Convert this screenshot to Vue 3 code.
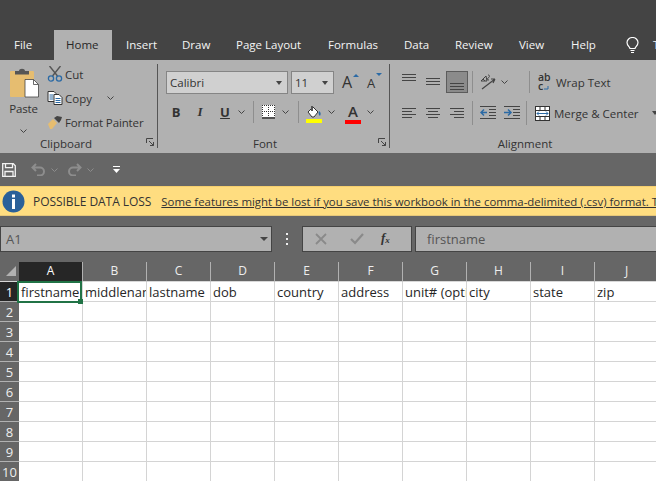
<script setup>
const tabs = [
  { name: 'File', w: 54, pl: 14 },
  { name: 'Home', w: 58, pl: 12, active: true },
  { name: 'Insert', w: 56, pl: 14 },
  { name: 'Draw', w: 54, pl: 14 },
  { name: 'Page Layout', w: 92, pl: 14 },
  { name: 'Formulas', w: 76, pl: 14 },
  { name: 'Data', w: 51, pl: 14 },
  { name: 'Review', w: 64, pl: 14 },
  { name: 'View', w: 52, pl: 14 },
  { name: 'Help', w: 56, pl: 14 }
]
const cols = ['A', 'B', 'C', 'D', 'E', 'F', 'G', 'H', 'I', 'J']
const first = ['firstname', 'middlename', 'lastname', 'dob', 'country', 'address', 'unit# (optional)', 'city', 'state', 'zip']
const rows = [2, 3, 4, 5, 6, 7, 8, 9, 10]
</script>

<template>
  <div class="app">
    <div class="title"></div>
    <nav class="tabs">
      <div v-for="t in tabs" :key="t.name" class="tab" :class="{ active: t.active }" :style="{ width: t.w + 'px', paddingLeft: t.pl + 'px' }">{{ t.name }}</div>
      <svg class="bulb" width="13" height="17" viewBox="0 0 13 17" fill="none" stroke="#fff" stroke-width="1.2"><path d="M4 11.5C3.5 9.5 1 8.5 1 5.5a5.5 5 0 0 1 11 0c0 3-2.500 4-3 6z"/><path d="M4.500 13.500h4M5 15.500h3"/></svg>
      <div class="tab tell">Tell me</div>
    </nav>

    <section class="ribbon">
      <div class="group clip">
        <div class="body clip-body">
          <div class="paste">
            <svg class="paste-ic" width="29" height="30" viewBox="0 0 29 30">
              <rect x="0" y="3" width="24" height="26" rx="1" fill="#e6bd70"/>
              <path d="M5 3h4c0-3 6-3 6 0h4v3.500H5z" fill="#555"/>
              <path d="M15 11.500h8.500l5 5V29H15z" fill="#fff" stroke="#444" stroke-width=".8"/>
              <path d="M23.500 11.500v5h5" fill="none" stroke="#444" stroke-width=".8"/>
            </svg>
            <span class="paste-label">Paste</span>
            <svg class="chev" viewBox="0 0 7 4"><path d="M.5.5l3 3 3-3"/></svg>
          </div>
          <div class="clip-list">
            <div class="clip-row">
              <svg width="15" height="16" viewBox="0 0 15 16" fill="none">
                <path d="M2 0l8 10M13 0L5 10" stroke="#555" stroke-width="1.400"/>
                <circle cx="3.500" cy="12.500" r="2.600" stroke="#2b6aa5" stroke-width="1.300"/>
                <circle cx="11.500" cy="12.500" r="2.600" stroke="#2b6aa5" stroke-width="1.300"/>
              </svg>
              <span>Cut</span>
            </div>
            <div class="clip-row">
              <svg width="15" height="14" viewBox="0 0 15 14">
                <path d="M.5.5h6l2 2v8H.5z" fill="#fff" stroke="#333"/>
                <path d="M2 4h4M2 6h4M2 8h4" stroke="#2b6aa5"/>
                <path d="M6.500 3.500h5l3 3v7h-8z" fill="#fff" stroke="#333"/>
                <path d="M8 7.500h5M8 9.500h5M8 11.500h5" stroke="#2b6aa5"/>
              </svg>
              <span>Copy</span>
              <svg class="chev copy-chev" viewBox="0 0 7 4"><path d="M.5.5l3 3 3-3"/></svg>
            </div>
            <div class="clip-row">
              <svg width="16" height="14" viewBox="0 0 16 14">
                <path d="M1 9l5-5 4 4-5 6H3z" fill="#e6bd70"/>
                <path d="M7 3l3-2 5 1-1 3-2 3z" fill="#444"/>
              </svg>
              <span class="painter">Format Painter</span>
            </div>
          </div>
        </div>
        <div class="label clip-label">Clipboard
          <svg class="launcher" width="8" height="8" viewBox="0 0 8 8" fill="none" stroke="#444"><path d="M.5 5V.5H7M3 3l4.500 4.500M7.500 4v3.500H4"/></svg>
        </div>
      </div>
      <div class="vsep"></div>

      <div class="group font">
        <div class="body font-body">
          <div class="row font-r1">
            <div class="combo combo-name"><span>Calibri</span><i class="caret"></i></div>
            <div class="combo combo-size"><span>11</span><i class="caret"></i></div>
            <div class="grow-a up">A<i class="tri-up"></i></div>
            <div class="grow-a down">A<i class="tri-down"></i></div>
          </div>
          <div class="row font-r2">
            <b class="fmt fb">B</b>
            <i class="fmt fi">I</i>
            <u class="fmt fu">U</u>
            <svg class="chev" viewBox="0 0 7 4"><path d="M.5.5l3 3 3-3"/></svg>
            <span class="isep sep-a"></span>
            <svg class="borders" width="13" height="14" viewBox="0 0 13 14">
              <rect width="13" height="12" fill="#fff"/>
              <path d="M.5 0v12M6.500 0v12M12.500 0v12M0 .5h13M0 6.500h13" stroke="#333" stroke-dasharray="1 1" fill="none"/>
              <path d="M0 13h13" stroke="#333" stroke-width="1.500"/>
            </svg>
            <svg class="chev ch-b" viewBox="0 0 7 4"><path d="M.5.5l3 3 3-3"/></svg>
            <span class="isep sep-b"></span>
            <svg class="fill" width="16" height="18" viewBox="0 0 16 18">
              <path d="M2 7l5-5 5 5-4 5-2 0z" fill="#fff" stroke="#333"/>
              <path d="M5 1h2v5H5z" fill="#555"/>
              <path d="M13 6c2 1 2 3 1 5-1-1-2-2-1-5z" fill="#2b6aa5"/>
              <rect y="14" width="16" height="4" fill="#ff0"/>
            </svg>
            <svg class="chev ch-c" viewBox="0 0 7 4"><path d="M.5.5l3 3 3-3"/></svg>
            <span class="color-a">A</span>
            <svg class="chev ch-d" viewBox="0 0 7 4"><path d="M.5.5l3 3 3-3"/></svg>
          </div>
        </div>
        <div class="label font-label">Font
          <svg class="launcher" width="8" height="8" viewBox="0 0 8 8" fill="none" stroke="#444"><path d="M.5 5V.5H7M3 3l4.500 4.500M7.500 4v3.500H4"/></svg>
        </div>
      </div>
      <div class="vsep"></div>

      <div class="group align">
        <div class="body align-body">
          <div class="row al-r1">
            <svg class="al" width="14" height="22" viewBox="0 0 14 22" stroke="#444"><path d="M0 3.500h14M0 6.500h14M0 9.500h14"/></svg>
            <svg class="al al-gap" width="14" height="22" viewBox="0 0 14 22" stroke="#444"><path d="M0 7.500h14M0 10.500h14M0 13.500h14"/></svg>
            <div class="al-btn">
              <svg width="14" height="22" viewBox="0 0 14 22" stroke="#444"><path d="M0 12.500h14M0 15.500h14M0 18.500h14"/></svg>
            </div>
            <span class="isep al-sep"></span>
            <svg class="orient" width="16" height="16" viewBox="0 0 16 16" fill="none">
              <path d="M2 15L15 5M15 5h-4M15 5l-2 4" stroke="#444" stroke-width="1.200"/>
              <path d="M1 7l5-5 1 5zM3 5l2 2M8 1c2 0 2 2 0 3-1 1-1 2 1 2" stroke="#444"/>
            </svg>
            <svg class="chev or-chev" viewBox="0 0 7 4"><path d="M.5.5l3 3 3-3"/></svg>
            <span class="isep al-sep2"></span>
            <svg class="wrap-ic" width="13" height="18" viewBox="0 0 13 18" fill="none">
              <path d="M8 15h4v-3" stroke="#2b6aa5"/>
            </svg>
            <span class="abc">ab<br>c</span>
            <span class="al-text wrap-t">Wrap Text</span>
          </div>
          <div class="row al-r2">
            <svg class="al" width="14" height="24" viewBox="0 0 14 24" stroke="#444"><path d="M0 7.500h14M0 10.500h10M0 13.500h14M0 16.500h10"/></svg>
            <svg class="al al-gap" width="14" height="24" viewBox="0 0 14 24" stroke="#444"><path d="M0 7.500h14M2 10.500h10M0 13.500h14M2 16.500h10"/></svg>
            <svg class="al al-gap" width="14" height="24" viewBox="0 0 14 24" stroke="#444"><path d="M0 7.500h14M4 10.500h10M0 13.500h14M4 16.500h10"/></svg>
            <span class="isep al-sep al-sep-b"></span>
            <svg class="ind" width="16" height="14" viewBox="0 0 16 14" fill="none">
              <path d="M0 .5h16M9 3.500h7M9 6.500h7M9 9.500h7M0 12.500h16" stroke="#444"/>
              <path d="M7 6.500H1M4 3.500l-3 3 3 3" stroke="#2b6aa5" stroke-width="1.500"/>
            </svg>
            <svg class="ind ind2" width="16" height="14" viewBox="0 0 16 14" fill="none">
              <path d="M0 .5h16M9 3.500h7M9 6.500h7M9 9.500h7M0 12.500h16" stroke="#444"/>
              <path d="M0 6.500h7M4 3.500l3 3-3 3" stroke="#2b6aa5" stroke-width="1.500"/>
            </svg>
            <span class="isep al-sep3"></span>
            <svg class="merge" width="15" height="15" viewBox="0 0 15 15" fill="none">
              <rect x=".5" y=".5" width="14" height="14" fill="#fff" stroke="#333"/>
              <path d="M0 4.500h15M0 10.500h15M5 .5v4M10 .5v4M5 10.500v4M10 10.500v4" stroke="#333"/>
              <path d="M2 7.500h11M4 5.500l-2 2 2 2M11 5.500l2 2-2 2" stroke="#2b6aa5"/>
            </svg>
            <span class="al-text merge-t">Merge &amp; Center</span>
            <i class="caret merge-caret"></i>
          </div>
        </div>
        <div class="label">Alignment</div>
      </div>
    </section>

    <div class="qat">
      <svg width="14" height="14" viewBox="0 0 14 14" fill="none" stroke="#f2f2f2" stroke-width="1.300"><path d="M.7.7h10.600l2 2v10.600H.7z"/><path d="M3.500.7v4h7v-4M3 13.300V8.500h8v4.800"/></svg>
      <svg class="q-undo" width="15" height="13" viewBox="0 0 15 13" fill="none" stroke="#8d8d8d" stroke-width="2"><path d="M5 1L1.500 4.500 5 8M2 4.500h7a4 4 0 0 1 0 8H6"/></svg>
      <svg class="chev q-chev" viewBox="0 0 7 4"><path d="M.5.5l3 3 3-3" stroke="#8d8d8d"/></svg>
      <svg class="q-redo" width="15" height="13" viewBox="0 0 15 13" fill="none" stroke="#8d8d8d" stroke-width="2"><path d="M10 1l3.500 3.500L10 8M13 4.500H6a4 4 0 0 0 0 8h3"/></svg>
      <svg class="chev q-chev" viewBox="0 0 7 4"><path d="M.5.5l3 3 3-3" stroke="#8d8d8d"/></svg>
      <svg class="q-cust" width="7" height="7" viewBox="0 0 7 7"><path d="M0 .5h7" stroke="#fff"/><path d="M0 3h7L3.500 7z" fill="#fff"/></svg>
    </div>

    <div class="msg">
      <svg width="23" height="23" viewBox="0 0 23 23"><circle cx="11.500" cy="11.500" r="11" fill="#2a6099"/><rect x="10" y="9" width="3" height="10" fill="#fff"/><rect x="10" y="4.500" width="3" height="3" fill="#fff"/></svg>
      <span class="msg-title">POSSIBLE DATA LOSS</span>
      <span class="msg-link">Some features might be lost if you save this workbook in the comma-delimited (.csv) format. To preserve these features</span>
    </div>

    <div class="fbar">
      <div class="namebox"><span>A1</span><i class="caret caret-lg"></i></div>
      <div class="dots"><i></i><i></i><i></i></div>
      <div class="fbtns">
        <svg width="12" height="12" viewBox="0 0 12 12" stroke="#8a8a8a" stroke-width="1.800"><path d="M1 1l10 10M11 1L1 11"/></svg>
        <svg class="fb-check" width="14" height="12" viewBox="0 0 14 12" fill="none" stroke="#8a8a8a" stroke-width="2.200"><path d="M1 6l4 4 8-9"/></svg>
        <span class="fx">f<sub>x</sub></span>
      </div>
      <div class="finput">firstname</div>
    </div>

    <div class="sheet">
      <div class="hdr corner"><svg width="10" height="10" viewBox="0 0 10 10"><path d="M10 0v10H0z" fill="#b1b1b1"/></svg></div>
      <div v-for="(c, i) in cols" :key="c" class="hdr" :class="{ sel: i === 0 }">{{ c }}</div>

      <div class="rh sel">1</div>
      <div v-for="(v, i) in first" :key="i" class="cell">
        <span>{{ v }}</span>
        <div v-if="i === 0" class="a1"><i class="handle"></i></div>
      </div>

      <template v-for="r in rows" :key="r">
        <div class="rh">{{ r }}</div>
        <div v-for="c in cols" :key="c" class="cell"></div>
      </template>
    </div>
  </div>
</template>

<style>
html, body { margin: 0; background: #666; overflow: hidden; }
</style>

<style scoped>
.app {
  width: 656px; height: 481px; overflow: hidden; background: #666; color: #333;
  font-family: "Open Sans", "Noto Sans", sans-serif; font-size: 11.5px;
}
.title { height: 30px; background: #444; }
.tabs { height: 30px; background: #444; display: flex; align-items: stretch; color: #f4f4f4; white-space: nowrap; overflow: hidden; }
.tab { box-sizing: border-box; line-height: 29px; flex: none; }
.tab.active { background: #b1b1b1; color: #262626; }
.bulb { flex: none; align-self: center; margin-left: 13px; }
.tell { margin-left: 14px; }

.ribbon { height: 93px; background: #b1b1b1; display: flex; overflow: hidden; white-space: nowrap; }
.group { display: flex; flex-direction: column; flex: none; height: 93px; }
.body { height: 75px; }
.label { position: relative; height: 18px; line-height: 18px; text-align: center; color: #333; box-sizing: border-box; }
.clip-label { padding-right: 25px; }
.font-label { padding-right: 17px; }
.launcher { position: absolute; right: 3px; top: 3px; }
.vsep { width: 1px; flex: none; margin: 4px 0 5px; background: #555; }
.row { display: flex; align-items: center; }
.chev { width: 7px; height: 4px; flex: none; display: block; fill: none; stroke: #444; }

.clip { width: 157px; }
.clip-body { display: flex; }
.paste { width: 47px; display: flex; flex-direction: column; align-items: center; padding-top: 8px; box-sizing: border-box; }
.paste-ic { margin-left: 1px; }
.paste-label { margin-top: 2px; line-height: 18px; letter-spacing: -.2px; }
.paste .chev { margin-top: 11px; }
.clip-list { padding-top: 2px; }
.clip-row { height: 24px; display: flex; align-items: center; position: relative; }
.clip-row > svg:first-child { width: 16px; margin-right: 2px; }
.copy-chev { margin-left: 15px; }
.painter { letter-spacing: -.12px; }

.font { width: 231px; }
.font-body { padding-left: 8px; box-sizing: border-box; }
.font-r1 { margin-top: 11px; height: 23px; }
.combo { box-sizing: border-box; height: 23px; background: #d0d0d0; border: 1px solid #858585; display: flex; align-items: center; justify-content: space-between; padding: 0 5px 0 3px; flex: none; color: #333; }
.combo-name { width: 122px; }
.combo-size { width: 43px; margin-left: 3px; }
.caret { display: block; width: 0; height: 0; border: 3px solid transparent; border-top: 4px solid #444; border-bottom: 0; flex: none; }
.caret-lg { border-width: 4px 4px 0; }
.grow-a { position: relative; flex: none; font-weight: 400; color: #333; line-height: 23px; }
.up { font-size: 16px; margin-left: 8px; width: 14px; }
.down { font-size: 13px; margin-left: 11px; margin-top: 2px; width: 12px; }
.tri-up, .tri-down { position: absolute; width: 0; height: 0; border: 3px solid transparent; border-top: 0; }
.tri-up { top: 3px; right: -3px; border-bottom: 3px solid #2b6aa5; }
.tri-down { top: 1px; right: -3px; border-top: 3px solid #2b6aa5; border-bottom: 0; }

.font-r2 { margin-top: 7px; height: 22px; }
.fmt { flex: none; text-align: center; font-size: 13px; color: #333; }
.fb { width: 20px; font-weight: 700; }
.fi { width: 28px; font-family: "Liberation Serif", serif; font-weight: 700; }
.fu { width: 22px; font-weight: 700; }
.font-r2 .fu + .chev { margin-left: 2px; }
.isep { display: block; width: 1px; flex: none; background: #8e8e8e; align-self: stretch; }
.sep-a { margin-left: 8px; }
.borders { margin-left: 8px; flex: none; }
.ch-b { margin-left: 7px; }
.sep-b { margin-left: 9px; }
.fill { margin-left: 7px; flex: none; margin-top: 4px; }
.ch-c { margin-left: 6px; }
.color-a { width: 16px; margin-left: 10px; flex: none; text-align: center; font-size: 15px; font-weight: 600; line-height: 17px; border-bottom: 4px solid #f00; box-sizing: content-box; margin-top: 3px; }
.ch-d { margin-left: 6px; }

.align { flex: 1; }
.align-body { padding-left: 12px; box-sizing: border-box; height: 75px; }
.align .label { width: 270px; }
.al-r1 { margin-top: 11px; height: 22px; position: relative; }
.al-r2 { margin-top: 8px; height: 24px; position: relative; }
.al { flex: none; display: block; }
.al-gap { margin-left: 10px; }
.al-btn { box-sizing: border-box; width: 22px; height: 22px; margin-left: 6px; background: #8b8b8b; border: 1px solid #5c5c5c; display: flex; justify-content: center; flex: none; }
.al-btn svg { margin-top: -1px; }
.al-sep { margin-left: 4px; }
.al-sep-b { margin-left: 8px; }
.orient { margin-left: 7px; flex: none; }
.or-chev { margin-left: 5px; }
.al-sep2 { margin-left: 21px; }
.wrap-ic { position: absolute; left: 134px; top: 3px; }
.abc { margin-left: 8px; width: 14px; font-size: 10.5px; line-height: 9px; font-weight: 600; flex: none; color: #333; }
.al-text { flex: none; position: relative; }
.wrap-t { margin-left: 4px; }
.ind { margin-left: 7px; flex: none; }
.ind2 { margin-left: 8px; }
.al-sep3 { margin-left: 6px; }
.merge { margin-left: 8px; flex: none; }
.merge-t { margin-left: 4px; }
.merge-caret { margin-left: 13px; }

.qat { height: 33px; background: #666; display: flex; align-items: center; padding-left: 2px; box-sizing: border-box; }
.q-undo { margin-left: 15px; }
.q-chev { margin-left: 5px; }
.q-redo { margin-left: 9px; }
.q-cust { margin-left: 19px; }

.msg { box-sizing: border-box; height: 30px; background: #ffdd80; border-top: 1px solid #f5cf6e; border-bottom: 1px solid #e6c779; display: flex; align-items: center; padding-left: 2px; white-space: nowrap; color: #333; overflow: hidden; font-size: 11.4px; }
.msg svg { flex: none; }
.msg-title { margin-left: 8px; font-size: 12px; letter-spacing: -.05px; }
.msg-link { margin-left: 10px; text-decoration: underline; }

.fbar { height: 46px; background: #666; display: flex; align-items: flex-start; padding-top: 10px; box-sizing: border-box; }
.namebox { box-sizing: border-box; width: 272px; height: 26px; background: #b1b1b1; border: 1px solid #444; display: flex; align-items: center; justify-content: space-between; padding: 0 3px 0 5px; font-size: 13px; color: #555; }
.dots { width: 30px; height: 26px; display: flex; flex-direction: column; align-items: center; justify-content: center; gap: 3px; }
.dots i { display: block; width: 2px; height: 2px; background: #eee; }
.fbtns { box-sizing: border-box; width: 110px; height: 26px; background: #b1b1b1; border: 1px solid #444; display: flex; align-items: center; padding-left: 12px; }
.fb-check { margin-left: 23px; }
.fx { margin-left: 17px; font-family: "Liberation Serif", serif; font-style: italic; font-weight: 700; font-size: 13px; color: #333; line-height: 12px; }
.fx sub { font-size: 9px; vertical-align: -1px; }
.finput { box-sizing: border-box; flex: 1; margin-left: 3px; height: 26px; background: #b1b1b1; border: 1px solid #444; border-right: 0; padding-left: 11px; line-height: 24px; font-size: 13px; color: #555; }

.sheet { display: grid; grid-template-columns: 19px repeat(10, 64px); grid-template-rows: 20px repeat(10, 20px); background: #fff; width: 660px; font-size: 13px; }
.hdr { box-sizing: border-box; background: #666; color: #eee; text-align: center; line-height: 18px; font-size: 12px; border-right: 1px solid #b1b1b1; border-bottom: 1px solid #d8d8d8; }
.corner { position: relative; border-right: 0; }
.corner svg { position: absolute; left: 6px; top: 4px; }
.hdr.sel, .rh.sel { background: #262626; color: #fff; }
.rh { box-sizing: border-box; background: #666; color: #eee; text-align: center; line-height: 20px; border-bottom: 1px solid #b1b1b1; }
.cell { box-sizing: border-box; position: relative; border-right: 1px solid #d4d4d4; border-bottom: 1px solid #d4d4d4; line-height: 20px; padding-left: 2px; color: #262626; white-space: nowrap; overflow: hidden; }
.cell:has(.a1) { overflow: visible; z-index: 2; }
.a1 { position: absolute; left: -2px; top: -1px; width: 65px; height: 22px; box-sizing: border-box; border: 2px solid #217346; pointer-events: none; }
.handle { position: absolute; right: -3px; bottom: -3px; width: 5px; height: 5px; background: #217346; display: block; }
</style>
